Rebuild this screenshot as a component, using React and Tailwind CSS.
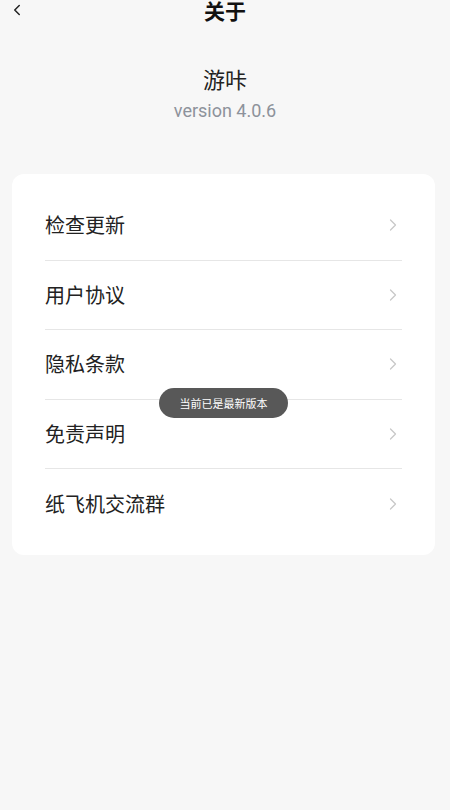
import { ChevronLeft, ChevronRight } from 'lucide-react';

const ITEMS = ['检查更新', '用户协议', '隐私条款', '免责声明', '纸飞机交流群'];

const font = { fontFamily: '"Noto Sans CJK SC", "Noto Sans", Roboto, sans-serif' };

export default function App() {
  return (
    <div className="relative w-[450px] h-[810px] bg-[#f7f7f7] overflow-hidden" style={font}>
      <div className="relative h-[24px] flex items-center justify-center">
        <ChevronLeft className="absolute left-[8px] top-[1px] text-[#222]" size={18} strokeWidth={2} />
        <h1 className="text-[21px] leading-[24px] font-bold text-[#111] -mt-[4px]">关于</h1>
      </div>

      <div className="flex flex-col items-center mt-[40px]">
        <div className="text-[22px] leading-[28px] text-[#222]">游咔</div>
        <div className="text-[18px] leading-[24px] text-[#8d929b] mt-[7px]" style={{ fontFamily: 'Roboto, "Noto Sans", sans-serif' }}>
          version 4.0.6
        </div>
      </div>

      <div className="ml-3 mr-[15px] mt-[51px] bg-white rounded-[12px] px-[33px] pt-[17px] pb-[16px]">
        {ITEMS.map((label, i) => (
          <div
            key={label}
            className={`h-[69.5px] flex items-center justify-between ${i < ITEMS.length - 1 ? 'border-b border-[#e6e6e6]' : ''}`}
          >
            <span className="text-[20px] text-[#222]">{label}</span>
            <ChevronRight className="text-[#c8c8c8] mr-[-1px]" size={20} strokeWidth={1.5} />
          </div>
        ))}
      </div>

      <div className="absolute left-[159px] top-[388px] w-[129px] h-[30px] rounded-full bg-[#585858] flex items-center justify-center">
        <span className="text-[11px] text-white">当前已是最新版本</span>
      </div>
    </div>
  );
}
